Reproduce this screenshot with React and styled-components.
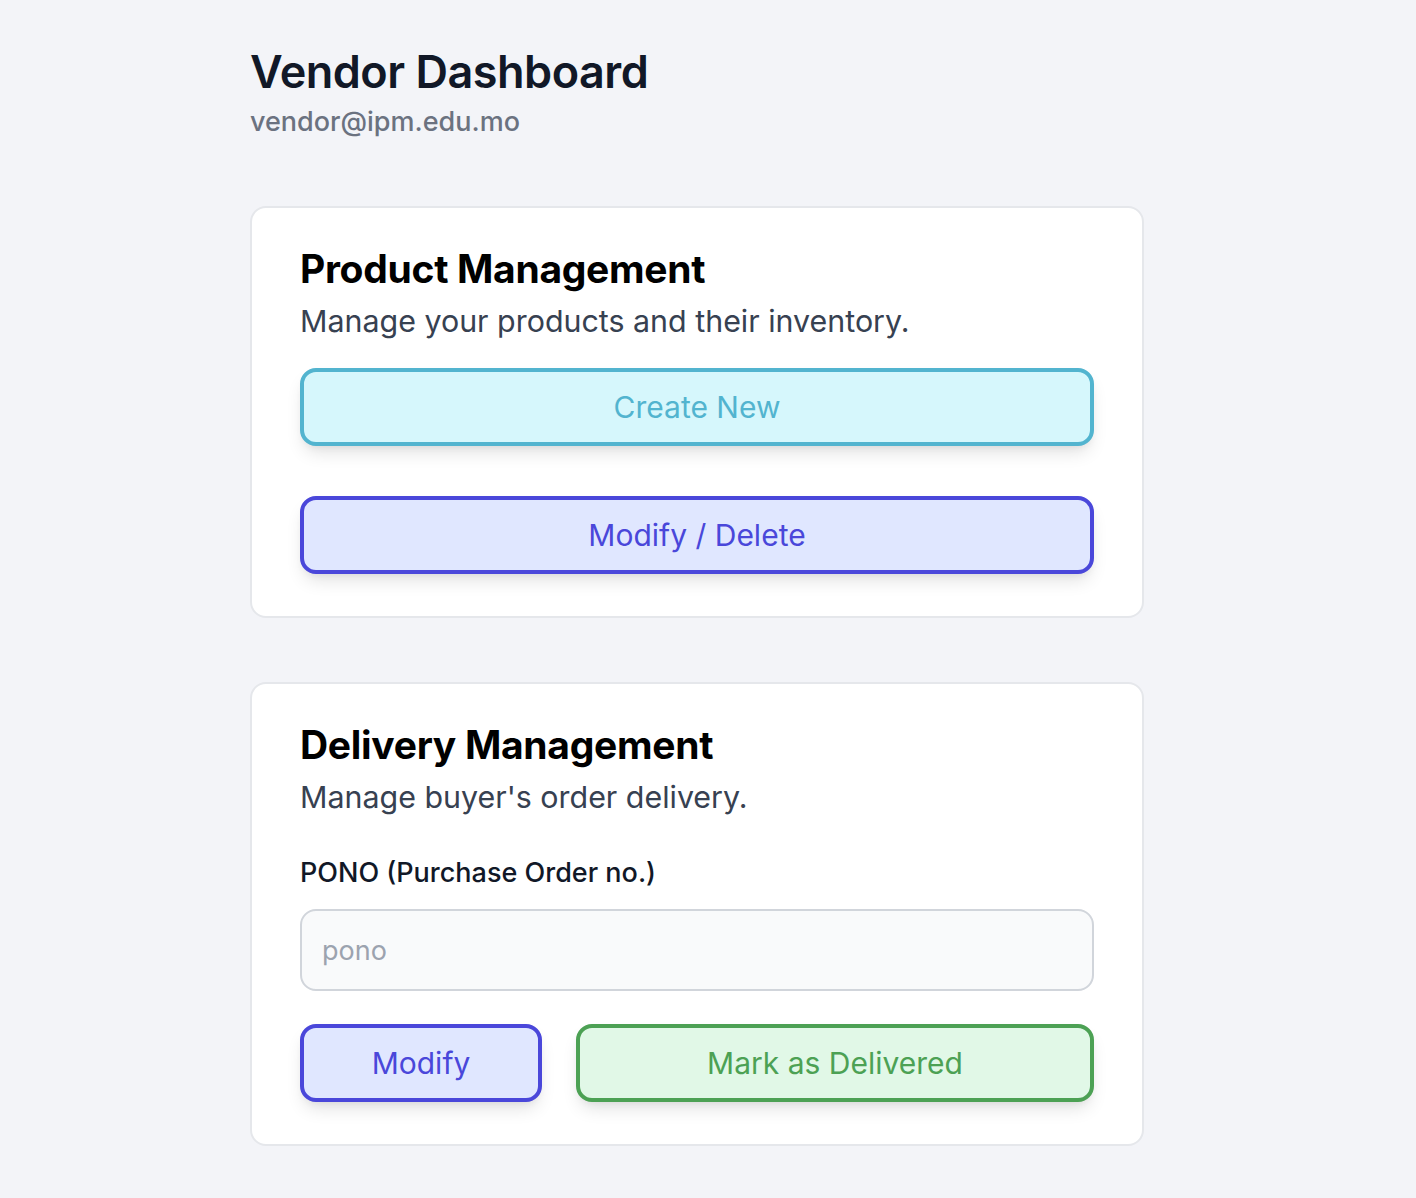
import styled, { createGlobalStyle } from "styled-components";

const GlobalStyle = createGlobalStyle`
	body {
		margin: 0;
		background: #f3f4f8;
		font-family: Inter, "Noto Sans", sans-serif;
	}
`;

const Page = styled.div`
	padding: 44px 0 60px 250px;
	width: 894px;
`;

const Header = styled.header`
	margin-bottom: 67px;
`;

const Title = styled.h1`
	font-size: 45px;
	font-weight: 600;
	line-height: 56px;
	color: #111827;
	margin: 0;
	letter-spacing: -0.5px;
`;

const Email = styled.div`
	font-size: 27px;
	font-weight: 500;
	color: #6b7280;
	line-height: 34px;
	margin-top: 5px;
`;

const Card = styled.section`
	background: #fff;
	border: 2px solid #e5e7eb;
	border-radius: 16px;
	padding: 38px 48px 42px;
	margin-bottom: 64px;
`;

const CardTitle = styled.h2`
	font-size: 39px;
	font-weight: 700;
	line-height: 46px;
	color: #000;
	margin: 0;
	letter-spacing: -0.3px;
`;

const CardDesc = styled.p`
	font-size: 30.4px;
	line-height: 40px;
	color: #374151;
	margin: 9px 0 0;
`;

const Actions = styled.div`
	display: flex;
	flex-direction: column;
	gap: 50px;
	margin-top: 27px;
`;

const Button = styled.button`
	display: flex;
	align-items: center;
	justify-content: center;
	height: 78px;
	width: ${(p) => p.$width || "100%"};
	flex: ${(p) => (p.$grow ? 1 : "none")};
	border: 4px solid ${(p) => p.$color};
	background: ${(p) => p.$bg};
	color: ${(p) => p.$color};
	border-radius: 16px;
	font-family: inherit;
	font-size: 30px;
	font-weight: 400;
	box-shadow: 0 10px 18px -4px rgba(0, 0, 0, 0.12), 0 4px 8px -4px rgba(0, 0, 0, 0.08);
	cursor: pointer;
`;

const Label = styled.label`
	display: block;
	font-size: 27px;
	font-weight: 500;
	color: #111827;
	margin-top: 38px;
	line-height: 36px;
`;

const Input = styled.input`
	display: block;
	box-sizing: border-box;
	width: 100%;
	height: 82px;
	margin-top: 18px;
	padding: 0 20px;
	background: #f9fafb;
	border: 2px solid #d1d5db;
	border-radius: 16px;
	font-family: inherit;
	font-size: 27px;
	color: #111827;
	outline: none;

	&::placeholder {
		color: #9ca3af;
	}
`;

const Row = styled.div`
	display: flex;
	gap: 34px;
	margin-top: 33px;
`;

const cyan = { $color: "#52b4cf", $bg: "#d6f7fc" };
const indigo = { $color: "#4a47da", $bg: "#e0e7ff" };
const green = { $color: "#4ca154", $bg: "#e1f8e7" };

export default function App() {
	return (
		<>
			<GlobalStyle />
			<Page>
				<Header>
					<Title>Vendor Dashboard</Title>
					<Email>vendor@ipm.edu.mo</Email>
				</Header>

				<Card>
					<CardTitle>Product Management</CardTitle>
					<CardDesc>Manage your products and their inventory.</CardDesc>
					<Actions>
						<Button {...cyan}>Create New</Button>
						<Button {...indigo}>Modify / Delete</Button>
					</Actions>
				</Card>

				<Card>
					<CardTitle>Delivery Management</CardTitle>
					<CardDesc>Manage buyer's order delivery.</CardDesc>
					<Label htmlFor="pono">PONO (Purchase Order no.)</Label>
					<Input id="pono" placeholder="pono" />
					<Row>
						<Button {...indigo} $width="242px">
							Modify
						</Button>
						<Button {...green} $grow>
							Mark as Delivered
						</Button>
					</Row>
				</Card>
			</Page>
		</>
	);
}
